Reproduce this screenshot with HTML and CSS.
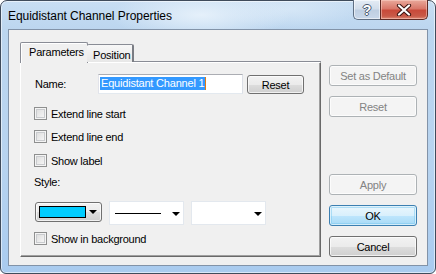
FILE: index.html
```html
<!DOCTYPE html>
<html>
<head>
<meta charset="utf-8">
<link rel="stylesheet" href="styles.css">
</head>
<body>
<div class="window">
  <div class="titlebar">
    <span class="title">Equidistant Channel Properties</span>
    <div class="caption">
      <div class="cap help"><span class="qm">?</span></div>
      <div class="cap close">
        <svg width="16" height="12" viewBox="0 0 16 12"><path d="M3 1.5 L13 10.5 M13 1.5 L3 10.5" stroke="#3b1410" stroke-width="4.2" stroke-linecap="round"/><path d="M3 1.5 L13 10.5 M13 1.5 L3 10.5" stroke="#ffffff" stroke-width="2.2" stroke-linecap="round"/></svg>
      </div>
    </div>
  </div>
  <div class="client">
    <div class="tabarea">
      <div class="tabs">
        <div class="tab active">Parameters</div>
        <div class="tab">Position</div>
      </div>
      <div class="panel">
        <div class="namerow">
          <span class="namelabel">Name:</span>
          <div class="textbox"><span class="sel">Equidistant Channel 1</span><span class="caret"></span></div>
          <div class="btn reset-small">Reset</div>
        </div>
        <label class="chk first"><span class="box"></span>Extend line start</label>
        <label class="chk second"><span class="box"></span>Extend line end</label>
        <label class="chk third"><span class="box"></span>Show label</label>
        <div class="stylelabel">Style:</div>
        <div class="combos">
          <div class="colorcombo"><span class="swatch"></span><span class="arrow"></span></div>
          <div class="combo"><span class="line"></span><span class="arrow"></span></div>
          <div class="combo"><span class="blank"></span><span class="arrow"></span></div>
        </div>
        <label class="chk bg"><span class="box"></span>Show in background</label>
      </div>
    </div>
    <div class="side">
      <div class="btn side-btn disabled first-btn">Set as Default</div>
      <div class="btn side-btn disabled gap10">Reset</div>
      <div class="btn side-btn disabled apply">Apply</div>
      <div class="btn side-btn ok gap10">OK</div>
      <div class="btn side-btn gap10">Cancel</div>
    </div>
  </div>
</div>
</body>
</html>
```
FILE: styles.css
```css
* { box-sizing: border-box; }
html, body { margin: 0; padding: 0; background: #ffffff; }
body { width: 436px; height: 274px; overflow: hidden; font-family: "Liberation Sans", Arial, sans-serif; }

.window {
  width: 436px; height: 274px;
  border: 1px solid #3f4b5b;
  border-radius: 7px 7px 6px 6px;
  background:
    radial-gradient(ellipse 90px 26px at 200px 14px, rgba(235,244,252,0.85), rgba(235,244,252,0) 100%),
    radial-gradient(ellipse 70px 20px at 290px 8px, rgba(225,238,250,0.6), rgba(225,238,250,0) 100%),
    linear-gradient(180deg, #c8def3 0px, #bcd6ef 28px, #b7d3ef 60%, #a9cbef 100%);
  box-shadow: inset 0 0 0 1px rgba(255,255,255,0.55);
  padding: 0 7px 7px 7px;
  display: flex; flex-direction: column;
}

.titlebar { height: 28px; flex: none; display: flex; align-items: center; }
.title { font-family: "Liberation Sans", Arial, sans-serif; font-size: 12px; color: #000; padding-top: 1px; letter-spacing: -0.05px; }
.caption { margin-left: auto; align-self: flex-start; margin-top: -1px; display: flex; height: 20px; }
.cap { height: 20px; display: flex; align-items: center; justify-content: center; }
.help {
  width: 27px;
  border: 1px solid #5f6f83; border-top: none; border-right: none;
  border-radius: 0 0 0 5px;
  background: linear-gradient(180deg, #e4ecf5 0%, #d3deeb 45%, #bfcfe2 55%, #c9d8ea 100%);
  box-shadow: inset 0 0 0 1px rgba(255,255,255,0.55);
}
.qm { font-family: "Liberation Sans", Arial, sans-serif; font-weight: bold; font-size: 14px; color: #ffffff; line-height: 1;
  text-shadow: -1px 0 #4a5a70, 1px 0 #4a5a70, 0 -1px #4a5a70, 0 1px #4a5a70; margin-top: 1px; }
.close {
  width: 48px;
  border: 1px solid #5e2a24; border-top: none;
  border-radius: 0 0 5px 0;
  background: linear-gradient(180deg, #e9a99b 0%, #d9786a 45%, #c84a3a 55%, #c85a48 85%, #de8a76 100%);
  box-shadow: inset 0 0 0 1px rgba(255,220,210,0.45);
}
.close svg { display: block; margin-top: 1px; }

.client {
  flex: 1;
  min-height: 0;
  background: #f0f0f0;
  border: 1px solid #8293a8;
  display: flex;
  align-items: flex-start;
  padding: 0 0 0 11px;
}

.tabarea { width: 301px; margin-top: 12px; display: flex; flex-direction: column; }
.tabs { height: 20px; display: flex; align-items: flex-end; position: relative; z-index: 1; }
.tab {
  font-size: 11px; letter-spacing: -0.2px; color: #000;
  height: 18px; padding: 0 5px 0 6px;
  border: 1px solid #898c95; border-bottom: none;
  border-radius: 2px 2px 0 0;
  background: linear-gradient(180deg, #f7f7f7, #e7e7e7);
  display: flex; align-items: center;
}
.tab.active {
  height: 21px; margin-bottom: -1px; width: 68px; padding: 0 0 3px 8px;
  background: #f0f0f0;
  border-color: #898c95;
  box-shadow: inset 1px 1px 0 #ffffff;
}
.tab + .tab { margin-left: -1px; width: 47px; padding-left: 6px; border-left: none; border-right: 2px solid #7a7d84; padding-top: 2px; }

.panel {
  height: 195px;
  border: 1px solid;
  border-color: #ffffff #696969 #696969 #ffffff;
  box-shadow: inset -1px -1px 0 #a0a0a0, 0 -1px 0 #898c95;
  padding: 11px 0 0 13px;
  display: flex; flex-direction: column; align-items: flex-start;
}

.namerow { display: flex; align-items: flex-start; height: 20px; }
.namelabel { font-size: 11px; letter-spacing: -0.25px; width: 64px; line-height: 13px; margin-top: 4px; padding-left: 1px; }
.textbox {
  width: 145px; height: 20px;
  background: #ffffff;
  border: 1px solid; border-color: #abadb3 #dbdfe6 #e3e9ef #e2e3ea;
  padding: 2px 0 0 1px;
  display: flex; align-items: flex-start;
}
.sel { background: #3399ff; color: #fff; font-size: 11px; letter-spacing: -0.2px; line-height: 13px; height: 13px; padding: 0 1px; }
.caret { width: 1px; height: 13px; background: #e07b12; }

.btn {
  display: flex; align-items: center; justify-content: center;
  font-size: 11px; letter-spacing: -0.25px; color: #000;
  border: 1px solid #707070; border-radius: 3px;
  background: linear-gradient(180deg, #f2f2f2 0%, #ebebeb 50%, #dddddd 51%, #cfcfcf 100%);
  box-shadow: inset 0 0 0 1px rgba(255,255,255,0.7);
}
.reset-small { width: 57px; height: 19px; margin-left: 4px; margin-top: 1px; }

.chk { display: flex; align-items: center; font-size: 11px; letter-spacing: -0.25px; height: 13px; line-height: 12px; }
.box {
  width: 13px; height: 13px; margin-right: 4px; flex: none;
  border: 1px solid #8e8f8f;
  background: linear-gradient(135deg, #d9d9d9 0%, #ededed 60%, #fbfbfb 100%);
  box-shadow: inset 0 0 0 1px #f4f4f4, inset 0 0 0 2px #c9cbce;
}
.chk.first { margin-top: 13px; }
.chk.second { margin-top: 10px; }
.chk.third { margin-top: 11px; }
.chk.bg { margin-top: 7px; }

.stylelabel { font-size: 11px; letter-spacing: -0.25px; line-height: 13px; margin-top: 9px; }

.combos { display: flex; align-items: flex-start; gap: 7px; margin-top: 12px; margin-left: 1px; }
.colorcombo {
  width: 67px; height: 20px; margin-top: 1px;
  border: 1px solid #707070; border-radius: 3px;
  background: linear-gradient(180deg, #f2f2f2 0%, #ebebeb 50%, #dddddd 51%, #cfcfcf 100%);
  box-shadow: inset 0 0 0 1px rgba(255,255,255,0.7);
  display: flex; align-items: flex-start; padding: 3px 0 0 3px;
}
.swatch { width: 47px; height: 12px; background: #00ccff; border: 1px solid #000; }
.arrow { width: 0; height: 0; border-left: 4px solid transparent; border-right: 4px solid transparent; border-top: 4px solid #000; }
.colorcombo .arrow { margin: 4px 0 0 3px; }
.combo {
  width: 75px; height: 24px;
  background: #ffffff;
  border: 1px solid #e3e8ee;
  display: flex; align-items: center; padding: 0 0 0 5px;
}
.line { width: 46px; height: 1px; background: #000; }
.blank { width: 46px; }
.combo .arrow { margin-left: 11px; margin-top: 1px; }

.side { width: 88px; margin-left: 8px; display: flex; flex-direction: column; }
.side-btn { height: 21px; flex: none; }
.first-btn { margin-top: 35px; }
.gap10 { margin-top: 10px; }
.apply { margin-top: 57px; }
.btn.disabled {
  color: #838383;
  border-color: #adb2b5;
  background: #f4f4f4;
  box-shadow: inset 0 0 0 1px #fcfcfc;
}
.btn.ok {
  border-color: #3c7fb1;
  background: linear-gradient(180deg, #eaf6fd 0%, #d9f0fc 50%, #bee6fd 51%, #a7d9f5 100%);
  box-shadow: inset 0 0 0 1px rgba(255,255,255,0.6), inset 0 0 0 2px rgba(120,200,240,0.5);
}
```
